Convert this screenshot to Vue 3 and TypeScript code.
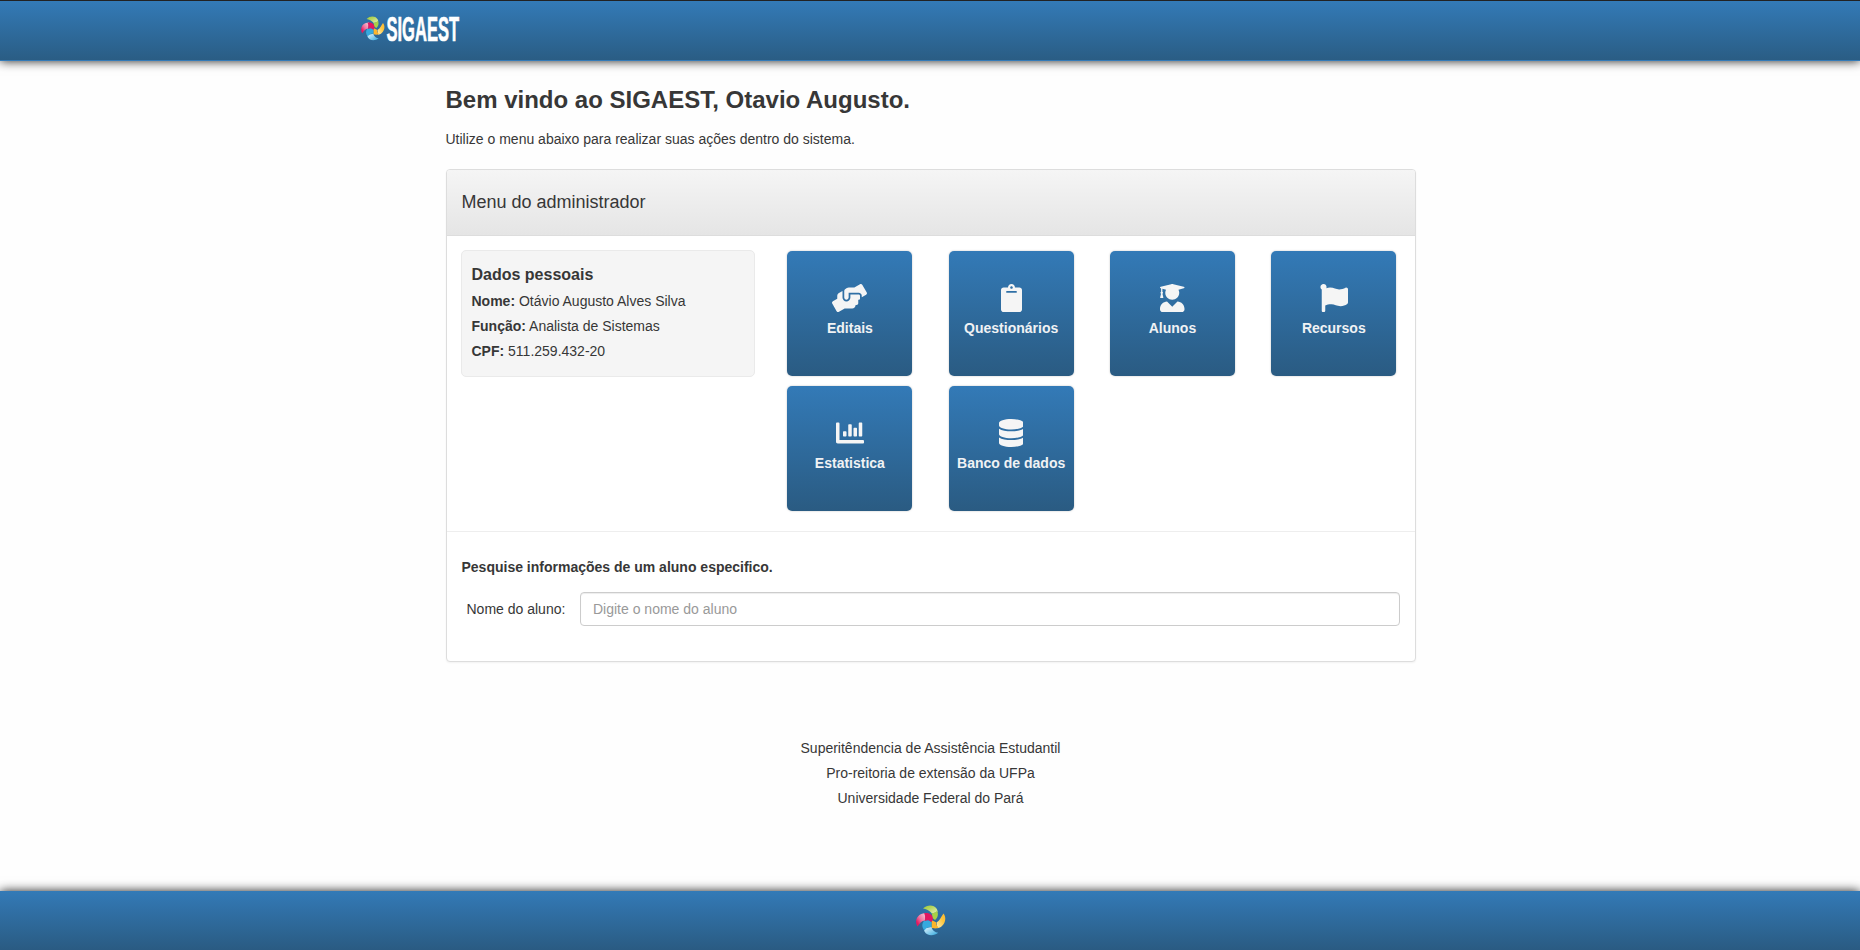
<script setup lang="ts">
interface MenuItem {
  label: string
  width: number
  box: string
  path: string
}

interface Field {
  name: string
  value: string
}

const fields: Field[] = [
  { name: 'Nome:', value: 'Otávio Augusto Alves Silva' },
  { name: 'Função:', value: 'Analista de Sistemas' },
  { name: 'CPF:', value: '511.259.432-20' },
]

const items: MenuItem[] = [
  {
    label: 'Editais',
    width: 35,
    box: '0 0 640 512',
    path: 'M488 192H336v56c0 39.7-32.3 72-72 72s-72-32.3-72-72V126.4l-64.9 39C107.8 176.9 96 197.8 96 220.2v47.3l-80 46.2C.7 322.5-4.6 342.1 4.3 357.4l80 138.6c8.8 15.3 28.4 20.5 43.7 11.7L231.4 448H368c35.3 0 64-28.7 64-64h16c17.7 0 32-14.3 32-32v-64h8c13.3 0 24-10.7 24-24v-48c0-13.3-10.7-24-24-24zm147.7-37.4L555.7 16C546.9.7 527.3-4.5 512 4.3L408.6 64H306.4c-12 0-23.7 3.4-33.9 9.7L239 94.6c-9.4 5.8-15 16.1-15 27.1V248c0 22.1 17.9 40 40 40s40-17.9 40-40v-88h184c30.9 0 56 25.1 56 56v28.5l80-46.2c15.3-8.9 20.5-28.4 11.7-43.7z',
  },
  {
    label: 'Questionários',
    width: 21,
    box: '0 0 384 512',
    path: 'M384 112v352c0 26.51-21.49 48-48 48H48c-26.51 0-48-21.49-48-48V112c0-26.51 21.49-48 48-48h80c0-35.29 28.71-64 64-64s64 28.71 64 64h80c26.51 0 48 21.49 48 48zM192 40c-13.255 0-24 10.745-24 24s10.745 24 24 24 24-10.745 24-24-10.745-24-24-24m96 114v-20a6 6 0 0 0-6-6H102a6 6 0 0 0-6 6v20a6 6 0 0 0 6 6h180a6 6 0 0 0 6-6z',
  },
  {
    label: 'Alunos',
    width: 24.5,
    box: '0 0 448 512',
    path: 'M319.4 320.6L224 416l-95.4-95.4C57.1 323.7 0 382.2 0 454.4v9.6c0 26.5 21.5 48 48 48h352c26.5 0 48-21.5 48-48v-9.6c0-72.2-57.1-130.7-128.6-133.8zM13.6 79.8l6.4 1.5v58.4c-7 4.2-12 11.5-12 20.3 0 8.4 4.6 15.4 11.1 19.7L3.5 242c-1.7 6.9 2.1 14 7.6 14h41.8c5.5 0 9.3-7.1 7.6-14l-15.6-62.3C51.4 175.4 56 168.4 56 160c0-8.8-5-16.1-12-20.3V87.1l66 15.9c-8.6 17.2-14 36.4-14 57 0 70.7 57.3 128 128 128s128-57.3 128-128c0-20.6-5.3-39.8-14-57l96.3-23.2c18.2-4.4 18.2-27.1 0-31.5l-190.4-46c-13-3.1-26.7-3.1-39.7 0L13.6 48.2c-18.1 4.4-18.1 27.2 0 31.6z',
  },
  {
    label: 'Recursos',
    width: 28,
    box: '0 0 512 512',
    path: 'M349.565 98.783C295.978 98.783 251.721 64 184.348 64c-24.955 0-47.309 4.384-68.045 12.013a55.947 55.947 0 0 0 3.586-23.562C118.117 24.015 94.806 1.206 66.338.048 34.345-1.254 8 24.296 8 56c0 19.026 9.497 35.825 24 45.945V488c0 13.255 10.745 24 24 24h16c13.255 0 24-10.745 24-24v-94.4c28.311-12.064 63.582-22.122 114.435-22.122 53.588 0 97.844 34.783 165.217 34.783 48.169 0 86.667-16.294 122.505-40.858C506.84 359.452 512 349.571 512 339.045v-243.1c0-23.393-24.269-38.87-45.485-29.016-34.338 15.948-76.454 31.854-116.95 31.854z',
  },
  {
    label: 'Estatistica',
    width: 28,
    box: '0 0 512 512',
    path: 'M332.8 320h38.4c6.4 0 12.8-6.4 12.8-12.8V172.8c0-6.4-6.4-12.8-12.8-12.8h-38.4c-6.4 0-12.8 6.4-12.8 12.8v134.4c0 6.4 6.4 12.8 12.8 12.8zm96 0h38.4c6.4 0 12.8-6.4 12.8-12.8V76.8c0-6.4-6.4-12.8-12.8-12.8h-38.4c-6.4 0-12.8 6.4-12.8 12.8v230.4c0 6.4 6.4 12.8 12.8 12.8zm-288 0h38.4c6.4 0 12.8-6.4 12.8-12.8v-70.4c0-6.4-6.4-12.8-12.8-12.8h-38.4c-6.4 0-12.8 6.4-12.8 12.8v70.4c0 6.4 6.4 12.8 12.8 12.8zm96 0h38.4c6.4 0 12.8-6.4 12.8-12.8V108.8c0-6.4-6.4-12.8-12.8-12.8h-38.4c-6.4 0-12.8 6.4-12.8 12.8v198.4c0 6.4 6.4 12.8 12.8 12.8zM496 384H64V80c0-8.84-7.16-16-16-16H16C7.16 64 0 71.16 0 80v336c0 17.67 14.33 32 32 32h464c8.84 0 16-7.16 16-16v-32c0-8.84-7.16-16-16-16z',
  },
  {
    label: 'Banco de dados',
    width: 24.5,
    box: '0 0 448 512',
    path: 'M448 73.143v45.714C448 159.143 347.667 192 224 192S0 159.143 0 118.857V73.143C0 32.857 100.333 0 224 0s224 32.857 224 73.143zM448 176v102.857C448 319.143 347.667 352 224 352S0 319.143 0 278.857V176c48.125 33.143 136.208 48.572 224 48.572S399.874 209.143 448 176zm0 160v102.857C448 479.143 347.667 512 224 512S0 479.143 0 438.857V336c48.125 33.143 136.208 48.572 224 48.572S399.874 369.143 448 336z',
  },
]
</script>

<template>
  <div class="page">
    <!-- Pinwheel emblem shared by the top bar and the footer -->
    <svg class="defs" width="0" height="0" aria-hidden="true">
      <defs>
        <linearGradient id="green" x1="0" y1="0" x2="1" y2="1">
          <stop offset="0" stop-color="#9cc93c" />
          <stop offset=".4" stop-color="#b5d65c" />
          <stop offset="1" stop-color="#e6f2bd" />
        </linearGradient>
        <linearGradient id="yellow" x1="1" y1="0" x2="0" y2="1">
          <stop offset="0" stop-color="#fdb72a" />
          <stop offset=".4" stop-color="#fdc63f" />
          <stop offset="1" stop-color="#fff0b8" />
        </linearGradient>
        <linearGradient id="blue" x1="0" y1="0" x2="1" y2="1">
          <stop offset="0" stop-color="#e3f4fc" />
          <stop offset=".5" stop-color="#8dd0ef" />
          <stop offset="1" stop-color="#2fa6dc" />
        </linearGradient>
        <linearGradient id="pink" x1="1" y1="0" x2="0" y2="1">
          <stop offset="0" stop-color="#fbd3e0" />
          <stop offset=".5" stop-color="#f0739f" />
          <stop offset=".8" stop-color="#e5185f" />
        </linearGradient>
        <symbol id="pinwheel" viewBox="0 0 30 31">
          <path fill="url(#green)" d="M7 3.500C11-.7 18-.5 20.500 3.500C21.500 5 21.500 6 21.500 7L16 8.500C13.500 5.500 10 4 7 3.500Z" />
          <path fill="#a9d046" d="M21 5.500C23 9.500 21.500 13 19 15L15.800 12.500C16.500 11 16.300 9.500 15.500 8.500C18 8 20 7.500 21 5.500Z" />
          <path fill="url(#yellow)" d="M27.500 8.500C30.500 12 29.500 18 26 21C24.500 22.500 23 23 21.500 23.200L20.500 17.500C24 15.500 25 12 27.500 8.500Z" />
          <path fill="#fdb52b" d="M15.500 15L20 17.200C20.300 19.500 21 22 23 22.500C20 24 17 23.500 15.500 22.500Z" />
          <path fill="url(#blue)" d="M8 23C10.500 23.300 13.500 22 15.500 22C16 25 19 27.500 22.200 27.800C18.500 31 11 31.500 8.500 26.500C8 25.500 8 24 8 23Z" />
          <path fill="#35a9df" d="M7.500 16.500C10 14.500 14 15 15.500 17V22C13 21.800 10.500 22 8.500 25.500C5.500 22 6 19 7.500 16.500Z" />
          <path fill="url(#pink)" d="M1.500 21.500C-1.500 17 .5 10.500 6 8.700C7.500 8.200 9 8 10 8L9 15.500C5.500 15.800 4 18 1.500 21.500Z" />
          <path fill="#e2175f" d="M8 8.300C13 7.300 17.500 10 16.800 14.500C16.500 15.500 16 16.500 15 17C13.500 15 11 14.800 8.800 16C9.300 13 9.500 10.500 8 8.300Z" />
        </symbol>
      </defs>
    </svg>

    <header class="topbar">
      <a class="brand">
        <svg class="brand-mark" width="24" height="25"><use href="#pinwheel" /></svg>
        <svg class="brand-name" width="78" height="46">
          <text x="0.5" y="33" textLength="72.5" lengthAdjust="spacingAndGlyphs">SIGAEST</text>
        </svg>
      </a>
    </header>

    <main class="content">
      <h1>Bem vindo ao SIGAEST, Otavio Augusto.</h1>
      <p class="lead">Utilize o menu abaixo para realizar suas ações dentro do sistema.</p>

      <section class="panel">
        <div class="panel-heading">Menu do administrador</div>
        <div class="panel-body">
          <aside class="well">
            <h2>Dados pessoais</h2>
            <p v-for="field in fields" :key="field.name">
              <b>{{ field.name }}</b> {{ field.value }}
            </p>
          </aside>
          <nav class="tiles">
            <a v-for="item in items" :key="item.label" class="tile">
              <svg :width="item.width" height="28" :viewBox="item.box"><path :d="item.path" /></svg>
              <span>{{ item.label }}</span>
            </a>
          </nav>
        </div>
        <form class="search" @submit.prevent>
          <b>Pesquise informações de um aluno especifico.</b>
          <div class="row">
            <label for="aluno">Nome do aluno:</label>
            <input id="aluno" type="text" placeholder="Digite o nome do aluno" />
          </div>
        </form>
      </section>

      <div class="credits">
        <p>Superitêndencia de Assistência Estudantil</p>
        <p>Pro-reitoria de extensão da UFPa</p>
        <p>Universidade Federal do Pará</p>
      </div>
    </main>

    <footer class="footer">
      <svg width="30" height="31"><use href="#pinwheel" /></svg>
    </footer>
  </div>
</template>

<style>
body {
  margin: 0;
  background: #fefefe;
}
</style>

<style scoped>
* {
  box-sizing: border-box;
}
.page {
  display: flex;
  flex-direction: column;
  height: 950px;
  overflow: hidden;
  font: 14px/25px "Liberation Sans", Arial, sans-serif;
  color: #373737;
}
.defs {
  position: absolute;
}
p,
h1,
h2 {
  margin: 0;
}
.topbar {
  height: 61px;
  flex: none;
  border-top: 1px solid #222;
  border-bottom: 1px solid #337ab7;
  background: linear-gradient(#337ab7, #2a5d84);
  box-shadow: 0 0 10px #222;
  padding: 7px 0 0 361px;
}
.brand {
  display: flex;
}
.brand-mark {
  margin-top: 8px;
}
.brand-name {
  margin-left: 1px;
}
.brand-name text {
  font: bold 35px "Liberation Sans", Arial, sans-serif;
  fill: #fff;
  stroke: #fff;
  stroke-width: 0.7px;
}
.content {
  flex: 1;
  width: 970px;
  margin-left: 445.5px;
}
h1 {
  margin-top: 26px;
  font-size: 24px;
  line-height: 26px;
}
.lead {
  margin: 14px 0 17px;
}
.panel {
  height: 493px;
  border: 1px solid #ddd;
  border-radius: 4px;
  background: #fff;
  box-shadow: 0 1px 2px rgba(0, 0, 0, 0.05);
}
.panel-heading {
  height: 66px;
  padding: 0 15px;
  border-bottom: 1px solid #ddd;
  border-radius: 3px 3px 0 0;
  background: linear-gradient(#f5f5f5, #e5e5e5);
  font-size: 18px;
  line-height: 64px;
}
.panel-body {
  display: flex;
  align-items: flex-start;
  height: 296px;
  padding: 14px 0 0 14px;
  border-bottom: 1px solid #eee;
}
.well {
  width: 294px;
  height: 127px;
  flex: none;
  padding: 10px;
  border: 1px solid #eaeaea;
  border-radius: 5px;
  background: #f5f5f5;
}
.well h2 {
  font-size: 16px;
  line-height: 27px;
  margin-bottom: 1px;
}
.tiles {
  display: grid;
  grid-template-columns: repeat(4, 125px);
  gap: 10px 36.3px;
  margin: 1px 0 0 32.9px;
}
.tile {
  display: flex;
  flex-direction: column;
  align-items: center;
  height: 125px;
  padding-top: 33px;
  border-radius: 5px;
  background: linear-gradient(#337ab7, #2a5b82);
  box-shadow: 0 0 2px rgba(0, 0, 0, 0.25);
  color: #f0f2f4;
  font-weight: bold;
  white-space: nowrap;
}
.tile svg {
  flex: none;
  fill: #f5f5f5;
}
.tile span {
  margin-top: 4px;
}
.search {
  padding: 23px 14px 0 15px;
}
.search b {
  display: block;
}
.row {
  display: flex;
  align-items: center;
  margin-top: 12px;
  padding-left: 5px;
}
.row label {
  width: 113.5px;
  flex: none;
}
.row input {
  width: 820px;
  height: 34px;
  padding: 6px 12px;
  border: 1px solid #ccc;
  border-radius: 4px;
  background: #fff;
  box-shadow: inset 0 1px 1px rgba(0, 0, 0, 0.075);
  color: #555;
  font: 14px/20px "Liberation Sans", Arial, sans-serif;
}
.row input::placeholder {
  color: #999;
}
.credits {
  margin-top: 74px;
  text-align: center;
}
.footer {
  display: flex;
  justify-content: center;
  height: 59px;
  flex: none;
  padding: 14px 0 0 1px;
  background: linear-gradient(#337ab7, #2a5b82);
  box-shadow: 0 0 10px #222;
}
</style>
